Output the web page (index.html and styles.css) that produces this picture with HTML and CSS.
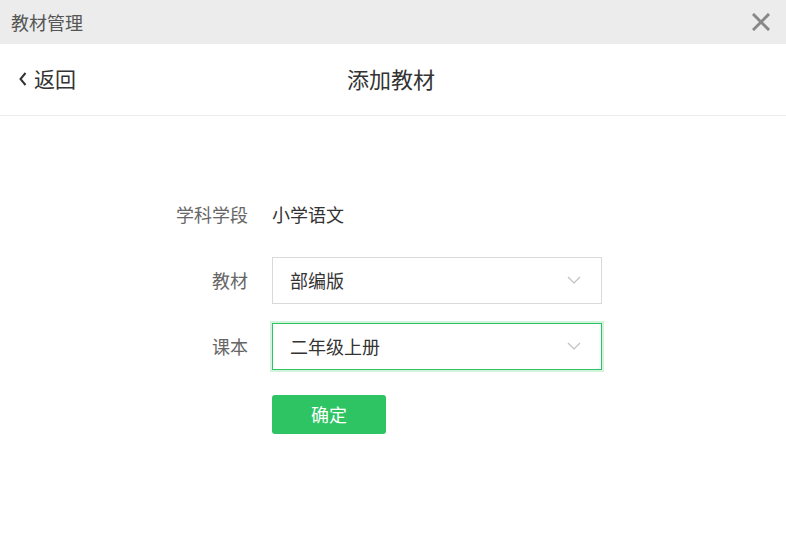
FILE: index.html
```html
<!DOCTYPE html>
<html lang="zh">
<head>
<meta charset="utf-8">
<link rel="stylesheet" href="styles.css">
</head>
<body>
<div class="window">
  <div class="titlebar">
    <span class="title">教材管理</span>
    <span class="close"><svg width="18" height="18" viewBox="0 0 18 18"><path d="M2 2L16 16M16 2L2 16" stroke="#888" stroke-width="3" stroke-linecap="square"/></svg></span>
  </div>
  <div class="header">
    <a class="back"><svg width="10" height="16" viewBox="0 0 10 16"><path d="M7.5 2L2.5 8L7.5 14" fill="none" stroke="#333" stroke-width="2"/></svg><span>返回</span></a>
    <h1 class="page-title">添加教材</h1>
  </div>
  <div class="form">
    <div class="row">
      <label class="label">学科学段</label>
      <div class="value">小学语文</div>
    </div>
    <div class="row">
      <label class="label">教材</label>
      <div class="select"><span>部编版</span><svg class="chev" width="14" height="8" viewBox="0 0 14 8"><path d="M1 1L7 7L13 1" fill="none" stroke="#c0c0c0" stroke-width="1.2"/></svg></div>
    </div>
    <div class="row">
      <label class="label">课本</label>
      <div class="select focus"><span>二年级上册</span><svg class="chev" width="14" height="8" viewBox="0 0 14 8"><path d="M1 1L7 7L13 1" fill="none" stroke="#c0c0c0" stroke-width="1.2"/></svg></div>
    </div>
    <div class="row">
      <span class="label"></span>
      <button class="btn">确定</button>
    </div>
  </div>
</div>
</body>
</html>
```

FILE: styles.css
```css
* { box-sizing: border-box; }
html, body { margin: 0; padding: 0; background: #fff; }
body { font-family: "Noto Sans CJK SC", "Noto Sans", sans-serif; color: #333; }
.window { width: 786px; height: 548px; background: #fff; }
.titlebar {
  height: 44px; background: #ececec;
  display: flex; align-items: center; justify-content: space-between;
  padding: 0 16px 0 11px;
}
.title { font-size: 18px; color: #555; }
.close { display: flex; width: 18px; height: 18px; }
.header {
  height: 72px; border-bottom: 1px solid #ececec;
  display: flex; align-items: center; justify-content: center;
  position: relative; padding-bottom: 4px;
}
.back {
  position: absolute; left: 18px; top: 0; bottom: 4px;
  display: flex; align-items: center; gap: 6px;
  font-size: 21px; color: #333;
}
.back svg { margin-top: 2px; }
.page-title { margin: 0; font-size: 22px; font-weight: normal; color: #333; padding-right: 4px; }
.form { padding-top: 74px; display: flex; flex-direction: column; gap: 18px; }
.row { display: flex; align-items: center; min-height: 48px; }
.label { width: 248px; text-align: right; font-size: 18px; color: #666; margin-right: 24px; }
.value { font-size: 18px; color: #333; }
.select {
  width: 330px; height: 47px; border: 1px solid #d9d9d9; background: #fff;
  display: flex; align-items: center; justify-content: space-between;
  padding: 0 20px 0 17px; font-size: 18px; color: #333;
}
.select.focus { border-color: #2ec463; box-shadow: 0 0 0 2px #d3f3dd; }
.btn {
  width: 114px; height: 39px; border: 0; border-radius: 3px;
  background: #2ec463; color: #fff; font-size: 18px;
  font-family: inherit; padding: 0; margin-top: 4px;
}
```
